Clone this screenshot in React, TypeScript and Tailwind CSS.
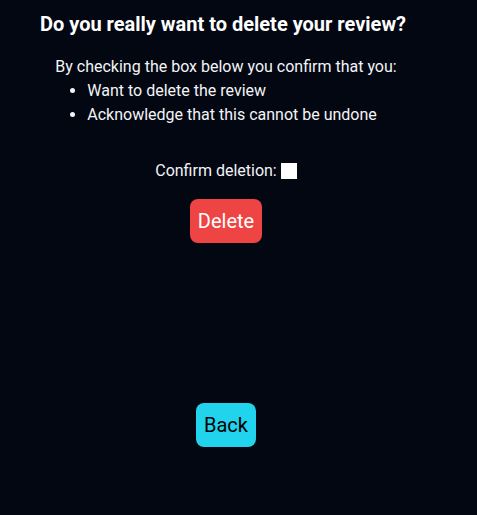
import React, { useState } from 'react';

const DeleteReview: React.FC = () => {
  const [confirmed, setConfirmed] = useState(false);

  return (
    <div className="min-h-[515px] bg-[#030712] text-white font-['Roboto',sans-serif]">
      <div className="w-[452px] flex flex-col items-center pt-[10px]">
        <h1 className="mr-[6px] text-xl font-bold leading-7">Do you really want to delete your review?</h1>
        <div className="mt-[17px] text-base leading-6 text-gray-100">
          <p>By checking the box below you confirm that you:</p>
          <ul className="list-disc pl-8">
            <li>Want to delete the review</li>
            <li>Acknowledge that this cannot be undone</li>
          </ul>
        </div>
        <label className="mt-8 flex items-center gap-1 leading-6 text-gray-100">
          Confirm deletion:
          <input
            type="checkbox"
            checked={confirmed}
            onChange={(e) => setConfirmed(e.target.checked)}
            className="appearance-none w-4 h-4 bg-white"
          />
        </label>
        <button className="mt-4 bg-[#ef4444] rounded-lg px-2 py-2 text-xl leading-7 text-white">
          Delete
        </button>
        <button className="mt-[160px] bg-[#22d3ee] rounded-lg px-2 py-2 text-xl leading-7 text-black">
          Back
        </button>
      </div>
    </div>
  );
};

export default function App() {
  return <DeleteReview />;
}
